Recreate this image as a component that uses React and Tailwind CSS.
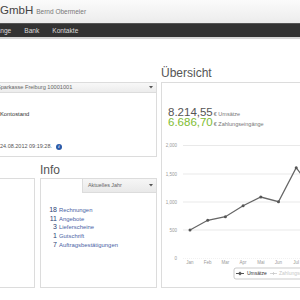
import React from "react";

function Arrow() {
  return (
    <svg width="4" height="3" viewBox="0 0 4 3" className="shrink-0">
      <path d="M0 0 L4 0 L2 2.5 Z" fill="#555" />
    </svg>
  );
}

function Chart() {
  const xs = [28, 45.7, 63.4, 81.1, 98.8, 116.5, 134.2, 151.9];
  const ys = [100, 90.3, 86.7, 75.7, 67, 71.7, 37.7, 61];
  const months = ["Jan", "Feb", "Mar", "Apr", "Mai", "Jun", "Jul", "Aug"];
  const grid = [
    [15.5, "2,000"],
    [44, "1,500"],
    [72, "1,000"],
    [100, "500"],
    [128.5, "0"],
  ];
  const pts = xs.map((x, i) => `${x},${ys[i]}`).join(" ");
  return (
    <svg width="140" height="156" viewBox="0 0 140 156" className="block mt-[3px] overflow-visible">
      {grid.map(([y, l]) => (
        <g key={l}>
          {l !== "0" && <line x1="21" x2="160" y1={y} y2={y} stroke="#e3e3e3" strokeWidth="0.8" />}
          <text x="15" y={y + 1.6} fontSize="4.5" fill="#9a9a9a" textAnchor="end" fontFamily="Liberation Sans, sans-serif">{l}</text>
        </g>
      ))}
      <line x1="21" x2="160" y1="128.5" y2="128.5" stroke="#e8e8e8" strokeWidth="0.6" strokeDasharray="1 1" />
      {months.map((m, i) => (
        <text key={m} x={xs[i]} y="134" fontSize="4.5" fill="#9a9a9a" textAnchor="middle" fontFamily="Liberation Sans, sans-serif">{m}</text>
      ))}
      <polyline points={pts} fill="none" stroke="#666" strokeWidth="1.3" />
      {xs.map((x, i) => (
        <circle key={i} cx={x} cy={ys[i]} r="1.5" fill="#555" />
      ))}
      <rect x="72" y="138" width="90" height="11" rx="2" fill="#fff" stroke="#b5b5b5" strokeWidth="0.7" />
      <line x1="74" x2="82" y1="143.5" y2="143.5" stroke="#555" strokeWidth="1" />
      <path d="M78 141.5 L80 143.5 L78 145.5 L76 143.5 Z" fill="#555" />
      <text x="85" y="145.3" fontSize="5" fill="#333" fontFamily="Liberation Sans, sans-serif">Umsätze</text>
      <line x1="108" x2="115" y1="143.5" y2="143.5" stroke="#ccc" strokeWidth="0.8" />
      <path d="M111.5 142 L111.5 145 M110 143.5 L113 143.5" stroke="#ccc" strokeWidth="0.8" />
      <text x="117" y="145.3" fontSize="5" fill="#c8c8c8" fontFamily="Liberation Sans, sans-serif">Zahlungseingänge</text>
    </svg>
  );
}

export default function App() {
  const items = [
    ["18", "Rechnungen"],
    ["11", "Angebote"],
    ["3", "Lieferscheine"],
    ["1", "Gutschrift"],
    ["7", "Auftragsbestätigungen"],
  ];
  return (
    <div className="w-[300px] h-[300px] overflow-hidden bg-white relative" style={{ fontFamily: '"Liberation Sans", Arial, sans-serif' }}>
      {/* header */}
      <div className="h-[23px] bg-gradient-to-b from-[#fbfbfb] to-[#ececec] flex items-baseline gap-[3px] pt-[3px] whitespace-nowrap">
        <span className="text-[11.5px] leading-[15px] text-[#444]">GmbH</span>
        <span className="text-[6.5px] text-[#777]">Bernd Obermeier</span>
      </div>
      {/* nav */}
      <div className="h-[16px] bg-[#333333] border-t border-[#555] border-b-2 border-b-[#d6d6d6] flex items-center gap-[13px] whitespace-nowrap text-[6.6px] text-[#dddddd]">
        <span className="ml-[-17px]">Vorgänge</span>
        <span>Bank</span>
        <span>Kontakte</span>
      </div>
      {/* main */}
      <div className="flex gap-[4px] ml-[-40px] pt-[25px]">
        {/* left column */}
        <div className="w-[197px] shrink-0 flex flex-col">
          <div className="h-[18px]"></div>
          <div className="h-[75px] border border-[#dcdcdc] flex flex-col">
            <div className="h-[10px] bg-gradient-to-b from-[#f8f8f8] to-[#ececec] border-b border-[#dcdcdc] flex items-center justify-between pl-[40px] pr-[3px] text-[5.6px] text-[#666] whitespace-nowrap">
              <span className="ml-[-4px]">Sparkasse Freiburg 10001001</span>
              <Arrow />
            </div>
            <div className="pl-[39px] text-[5.8px] text-[#333] mt-[18px] leading-[7px]">Kontostand</div>
            <div className="pl-[39px] text-[5.5px] text-[#555] mt-[25px] leading-[7px] flex items-center gap-[4px]">
              <span>24.08.2012 09:19:28.</span>
              <span className="w-[6px] h-[6px] rounded-full bg-[#2b5aa8] text-white text-[4.5px] leading-[6px] font-bold italic flex items-center justify-center" style={{ fontFamily: '"Liberation Serif", serif' }}>i</span>
            </div>
          </div>
          <div className="flex gap-[5px]">
            <div className="w-[75px] shrink-0 flex flex-col">
              <div className="h-[16px] mt-[5px]"></div>
              <div className="h-[110px] border border-[#dcdcdc]"></div>
            </div>
            <div className="w-[117px] shrink-0 flex flex-col">
              <div className="h-[16px] mt-[5px] text-[12px] leading-[16px] text-[#555]">Info</div>
              <div className="h-[110px] border border-[#dcdcdc] flex flex-col">
                <div className="self-end w-[74px] h-[14px] bg-gradient-to-b from-[#f6f6f6] to-[#e9e9e9] border-l border-b border-[#dcdcdc] flex items-center justify-between pl-[5px] pr-[3px] text-[5.4px] text-[#666] whitespace-nowrap">
                  <span>Aktuelles Jahr</span>
                  <Arrow />
                </div>
                <div className="mt-[13px] flex flex-col whitespace-nowrap">
                  {items.map(([n, t]) => (
                    <div key={t} className="flex items-center h-[8.6px] pl-[6px]">
                      <span className="w-[10px] text-right text-[7px] leading-[8px] text-[#2b3e74]">{n}</span>
                      <span className="ml-[2px] text-[5.9px] leading-[8px] text-[#4a62a5]">{t}</span>
                    </div>
                  ))}
                </div>
              </div>
            </div>
          </div>
        </div>
        {/* right column */}
        <div className="w-[200px] shrink-0 flex flex-col">
          <div className="h-[18px] text-[12px] leading-[18px] text-[#555]">Übersicht</div>
          <div className="h-[206px] border border-[#dcdcdc] flex flex-col">
            <div className="pt-[24px] pl-[6px] whitespace-nowrap flex flex-col">
              <div className="h-[10px] flex items-end gap-[1px]">
                <span className="text-[11.5px] leading-[9px] text-[#555]">8.214,55</span>
                <span className="text-[5.5px] leading-[6px] text-[#777]">€ Umsätze</span>
              </div>
              <div className="h-[10px] flex items-end gap-[1px]">
                <span className="text-[11.5px] leading-[9px] text-[#80bd31]">6.686,70</span>
                <span className="text-[5.5px] leading-[6px] text-[#777]">€ Zahlungseingänge</span>
              </div>
            </div>
            <Chart />
          </div>
        </div>
      </div>
    </div>
  );
}
